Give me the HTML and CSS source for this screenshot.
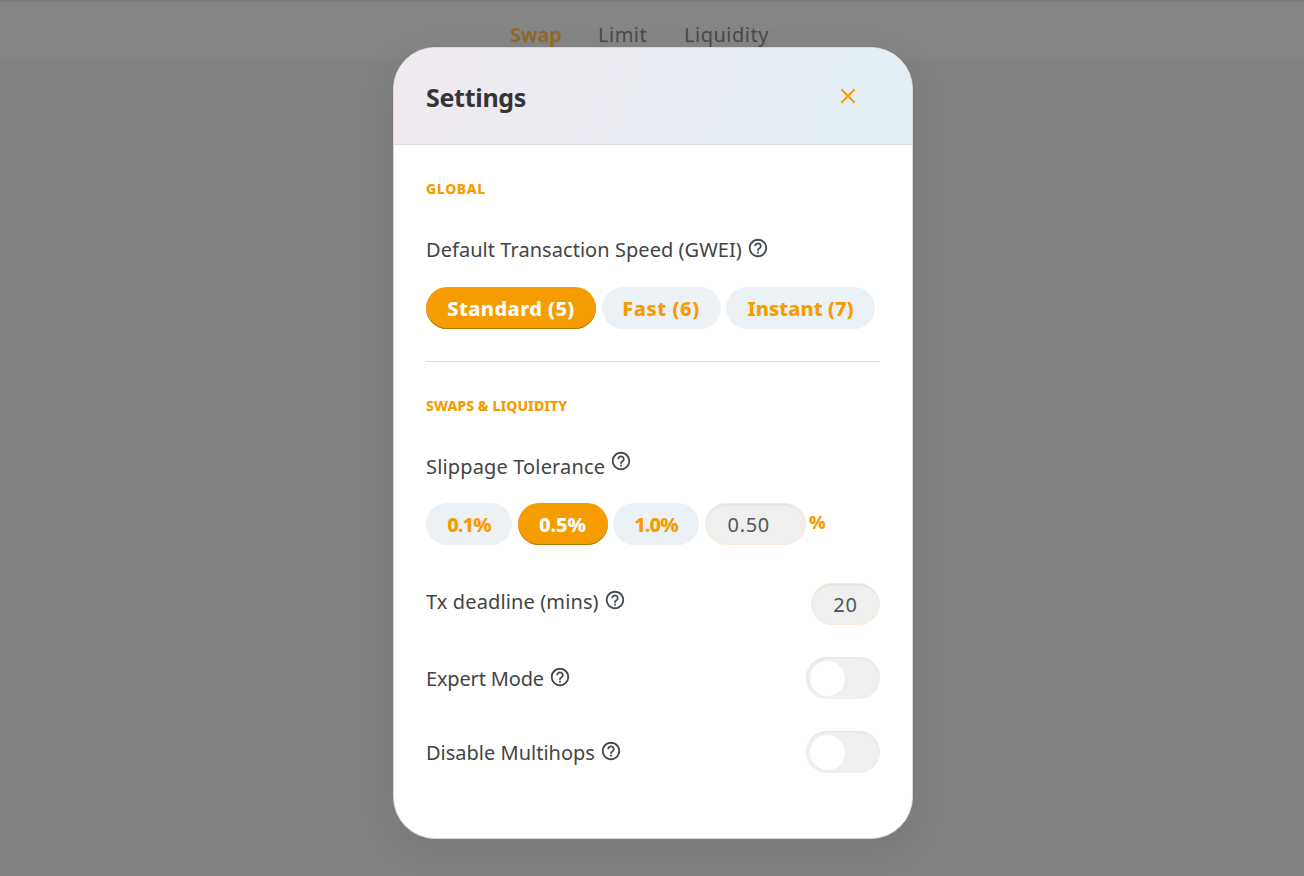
FILE: index.html
```html
<!DOCTYPE html>
<html lang="en">
<head>
<meta charset="utf-8">
<title>Settings</title>
<link rel="stylesheet" href="styles.css">
</head>
<body>
<svg width="0" height="0" class="sprite" aria-hidden="true">
  <symbol id="help" viewBox="0 0 24 24"><path d="M11 18h2v-2h-2v2zm1-16C6.48 2 2 6.48 2 12s4.48 10 10 10 10-4.48 10-10S17.52 2 12 2zm0 18c-4.41 0-8-3.59-8-8s3.59-8 8-8 8 3.59 8 8-3.59 8-8 8zm0-14c-2.21 0-4 1.79-4 4h2c0-1.1.9-2 2-2s2 .9 2 2c0 2-3 1.75-3 5h2c0-2.25 3-2.5 3-5 0-2.21-1.79-4-4-4z"/></symbol>
</svg>
<nav class="subnav">
  <a class="tab tab-swap">Swap</a>
  <a class="tab tab-limit">Limit</a>
  <a class="tab tab-liquidity">Liquidity</a>
</nav>
<div class="modal" role="dialog" aria-label="Settings">
  <header class="modal-header">
    <h2 class="title">Settings</h2>
    <svg class="close" viewBox="0 0 16 16"><path d="M1.3 1.3l13.4 13.4M14.7 1.3L1.3 14.7"/></svg>
  </header>
  <main class="modal-body">
    <h3 class="section section-global">GLOBAL</h3>
    <div class="label"><span class="t-speed">Default Transaction Speed (GWEI)</span><svg class="help"><use href="#help"/></svg></div>
    <div class="pills">
      <button class="pill active w-standard"><span class="t-standard">Standard (5)</span></button>
      <button class="pill w-fast"><span class="t-fast">Fast (6)</span></button>
      <button class="pill w-instant"><span class="t-instant">Instant (7)</span></button>
    </div>
    <div class="divider"></div>
    <h3 class="section section-swaps">SWAPS &amp; LIQUIDITY</h3>
    <div class="label"><span class="t-slippage">Slippage Tolerance</span><svg class="help help-raised"><use href="#help"/></svg></div>
    <div class="pills pills-slippage">
      <button class="pill w-small"><span class="t-pct">0.1%</span></button>
      <button class="pill active w-mid"><span class="t-pct-mid">0.5%</span></button>
      <button class="pill w-small"><span class="t-pct">1.0%</span></button>
      <div class="field field-slippage">0.50</div>
      <span class="percent">%</span>
    </div>
    <div class="row row-deadline"><div class="label"><span class="t-deadline">Tx deadline (mins)</span><svg class="help"><use href="#help"/></svg></div><div class="field field-deadline">20</div></div>
    <div class="row"><div class="label"><span class="t-expert">Expert Mode</span><svg class="help"><use href="#help"/></svg></div><div class="toggle"><i class="knob"></i></div></div>
    <div class="row"><div class="label"><span class="t-multi">Disable Multihops</span><svg class="help"><use href="#help"/></svg></div><div class="toggle"><i class="knob"></i></div></div>
  </main>
</div>
</body>
</html>
```
FILE: styles.css
```css
* { box-sizing: border-box; }
body {
  margin: 0;
  width: 1304px;
  height: 876px;
  overflow: hidden;
  background: #818181;
  font-family: "Noto Sans", sans-serif;
  font-size: 20px;
  line-height: 24px;
  color: #444;
}
.sprite { position: absolute; }
.subnav {
  display: flex;
  height: 59px;
  padding: 21px 0 0 510px;
  background: #858585;
  border-top: 2px solid #7b7b7b;
}
.tab { color: #47494c; white-space: nowrap; }
.tab-swap { width: 88px; color: #946720; font-weight: 600; }
.tab-limit { width: 86px; letter-spacing: 0.5px; }
.tab-liquidity { letter-spacing: 0.5px; }
.modal {
  position: absolute;
  left: 393px;
  top: 47px;
  width: 520px;
  height: 792px;
  overflow: hidden;
  background: #fff;
  border: 1px solid #d5d7d8;
  border-radius: 42px;
  box-shadow: 0 10px 36px rgba(0, 0, 0, 0.07);
}
.modal-header {
  display: flex;
  align-items: center;
  justify-content: space-between;
  height: 97px;
  padding: 1px 56px 0 32px;
  background: linear-gradient(111deg, #f1e9f0 0%, #e2f0f6 100%);
  border-bottom: 1px solid #dcdfe1;
}
.title { margin: 0; font-size: 25px; line-height: 30px; font-weight: 700; color: #353535; white-space: nowrap; letter-spacing: -0.3px; }
.close { width: 16px; height: 16px; margin-top: -1px; fill: none; stroke: #f59c00; stroke-width: 2; }
.modal-body { padding: 32px 32px 0; }
.section { margin: 0; font-size: 14px; line-height: 24px; font-weight: 800; color: #f59c00; white-space: nowrap; }
.section-global { letter-spacing: 0.6px; }
.section-swaps { letter-spacing: 0.05px; }
.label { display: flex; align-items: center; gap: 5px; height: 24px; margin-top: 37px; white-space: nowrap; }
.t-speed { letter-spacing: 0.05px; }
.t-slippage { letter-spacing: 0.15px; }
.t-deadline { letter-spacing: 0.12px; }
.t-expert { letter-spacing: -0.17px; }
.help { width: 22px; height: 22px; margin-top: -4px; fill: #444b50; }
.help-raised { margin-top: -12px; }
.pills { display: flex; gap: 5.5px; margin-top: 25px; }
.pills-slippage { margin-top: 24px; }
.pill {
  flex: none;
  height: 42px;
  padding: 2px 0 0;
  border: 0;
  border-radius: 21px;
  background: #ebf1f4;
  color: #f59c00;
  font: 800 20px/24px "Noto Sans", sans-serif;
  white-space: nowrap;
}
.active { background: #f59c00; color: #fff; box-shadow: inset 0 -1px 0 #b47200; }
.t-standard { letter-spacing: 0.4px; }
.t-fast { letter-spacing: 0.6px; }
.t-instant { letter-spacing: 0.05px; }
.t-pct { letter-spacing: -0.9px; }
.t-pct-mid { letter-spacing: -0.1px; }
.w-standard { width: 170px; }
.w-fast { width: 119px; }
.w-instant { width: 149px; }
.w-small { width: 86px; }
.w-mid { width: 90px; }
.divider { height: 1px; margin: 32px 0; background: #dcdcdc; }
.field {
  flex: none;
  height: 42px;
  padding-top: 9px;
  border: 1px solid #fdecd0;
  border-radius: 21px;
  background: #efefef;
  box-shadow: inset 0 2px 2px -1px rgba(0, 0, 0, 0.08);
  color: #50565a;
  letter-spacing: 0.7px;
}
.field-slippage { width: 101px; padding-left: 22px; }
.field-deadline { width: 69px; text-align: center; }
.percent { margin: 7px 0 0 -2px; font-size: 18px; font-weight: 800; color: #f59c00; }
.row { display: flex; justify-content: space-between; height: 42px; margin-top: 32px; }
.row .label { margin-top: 10px; }
.row-deadline { margin-top: 38px; }
.row-deadline .label { margin-top: 7px; }
.toggle {
  width: 74px;
  height: 42px;
  padding: 4px;
  border-radius: 21px;
  background: #efefef;
  box-shadow: inset 0 1px 2px rgba(0, 0, 0, 0.06);
}
.knob { display: block; width: 35px; height: 35px; border-radius: 50%; background: #fff; }
```
